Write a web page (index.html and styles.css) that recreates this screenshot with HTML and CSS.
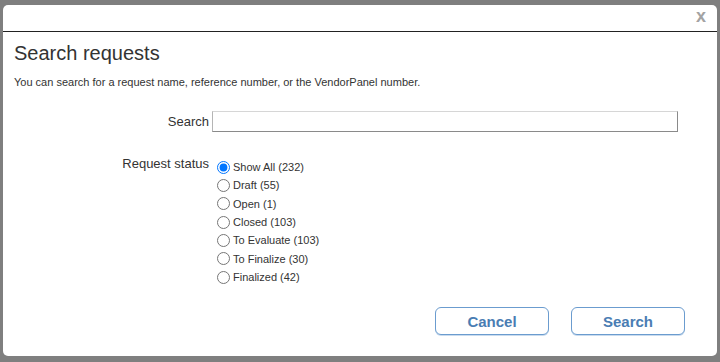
FILE: index.html
```html
<!DOCTYPE html>
<html lang="en">
<head>
    <meta charset="UTF-8">
    <meta name="viewport" content="width=device-width, initial-scale=1.0">
    <title>Search requests</title>
    <link rel="stylesheet" href="styles.css">
</head>
<body>
    <div class="dialog">
        <div class="dialog-header">
            <span class="close">x</span>
        </div>
        <div class="dialog-body">
            <h1>Search requests</h1>
            <p class="hint">You can search for a request name, reference number, or the VendorPanel number.</p>

            <div class="form-row search-row">
                <label class="row-label" for="q">Search</label>
                <input id="q" class="search-input" type="text" autofocus>
            </div>

            <div class="form-row status-row">
                <span class="row-label">Request status</span>
                <div class="options">
                    <label class="option"><input type="radio" name="status" checked>Show All (232)</label>
                    <label class="option"><input type="radio" name="status">Draft (55)</label>
                    <label class="option"><input type="radio" name="status">Open (1)</label>
                    <label class="option"><input type="radio" name="status">Closed (103)</label>
                    <label class="option"><input type="radio" name="status">To Evaluate (103)</label>
                    <label class="option"><input type="radio" name="status">To Finalize (30)</label>
                    <label class="option"><input type="radio" name="status">Finalized (42)</label>
                </div>
            </div>

            <div class="actions">
                <button class="btn">Cancel</button>
                <button class="btn">Search</button>
            </div>
        </div>
    </div>
</body>
</html>
```

FILE: styles.css
```css
html, body {
    height: 100%;
}
body {
    margin: 0;
    padding: 5px 3px 6px 3px;
    box-sizing: border-box;
    background-color: #7f7f7f;
    font-family: "Liberation Sans", Arial, sans-serif;
    color: #333;
}
.dialog {
    background-color: #fff;
    border-radius: 5px;
    height: 100%;
    display: flex;
    flex-direction: column;
}
.dialog-header {
    height: 26px;
    border-bottom: 1px solid #222;
    display: flex;
    justify-content: flex-end;
    align-items: center;
    padding-right: 11px;
}
.close {
    font-size: 18px;
    font-weight: bold;
    color: #a3a3a3;
    line-height: 1;
    margin-top: -4px;
    cursor: pointer;
}
.dialog-body {
    padding: 0 32px 0 11px;
}
h1 {
    font-size: 20px;
    font-weight: normal;
    margin: 10px 0 0 0;
    line-height: 23px;
}
.hint {
    font-size: 11px;
    margin: 11px 0 0 0;
    line-height: 13px;
}
.form-row {
    display: grid;
    grid-template-columns: 195px 1fr;
    column-gap: 3px;
}
.row-label {
    font-size: 13px;
    text-align: right;
    line-height: 15px;
}
.search-row {
    margin-top: 22px;
    align-items: center;
    margin-right: 7px;
}
.search-input {
    height: 21px;
    box-sizing: border-box;
    border: 1px solid #8a8a8a;
    border-top-color: #d6d6d6;
    border-left-color: #b5b5b5;
    margin: 0;
    padding: 0 4px;
    font-size: 13px;
    font-family: inherit;
    color: #333;
    outline: none;
}
.status-row {
    margin-top: 24px;
    align-items: start;
}
.options {
    padding-top: 2px;
    display: flex;
    flex-direction: column;
}
.option {
    font-size: 11px;
    height: 18.33px;
    display: flex;
    align-items: center;
}
.option input {
    margin: 0 3px 0 5px;
    width: 13px;
    height: 13px;
}
.actions {
    display: flex;
    justify-content: flex-end;
    gap: 22px;
    margin-top: 21px;
}
.btn {
    width: 114px;
    height: 28px;
    background-color: #fff;
    border: 1px solid #6b9ccf;
    border-radius: 6px;
    box-shadow: 0 1px 0 #c9dbee;
    color: #4a7db3;
    font-family: inherit;
    font-size: 15px;
    font-weight: bold;
    cursor: pointer;
}
```
